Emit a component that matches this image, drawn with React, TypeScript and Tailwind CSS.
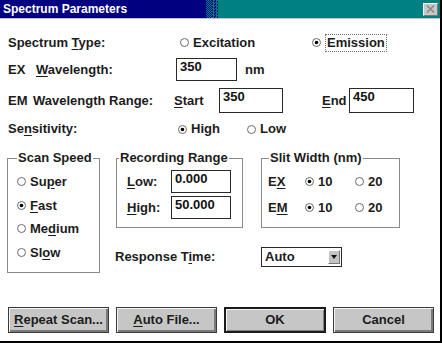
function Radio({ on, label, u }: { on?: boolean; label: string; u?: number }) {
  return (
    <span className="flex items-center">
      <svg width="9" height="9" viewBox="0 0 9 9" className="shrink-0">
        <circle cx="4.5" cy="4.5" r="4" fill="white" stroke="#6a6a6a" strokeWidth="1" />
        {on && <circle cx="4.5" cy="4.5" r="1.8" fill="#000" />}
      </svg>
      <span className="ml-[4px]">
        <Key text={label} u={u} />
      </span>
    </span>
  );
}

function Key({ text, u }: { text: string; u?: number }) {
  if (u === undefined) return <>{text}</>;
  return (
    <>
      {text.slice(0, u)}
      <span className="underline underline-offset-2">{text[u]}</span>
      {text.slice(u + 1)}
    </>
  );
}

function Field({ value, w, h }: { value: string; w: string; h: string }) {
  return (
    <div className={`${w} ${h} bg-white border border-[#2a2a2a] pl-[3px] leading-[16px] text-[#111]`}>
      {value}
    </div>
  );
}

function Button({ children, main }: { children: React.ReactNode; main?: boolean }) {
  return (
    <button
      className={
        main
          ? "w-[102px] h-[26px] bg-[#c6c6c6] border-2 border-[#1a1a1a] shadow-[inset_1px_1px_#f4f4f4,inset_-1px_-1px_#808080] font-bold"
          : "w-[101px] h-[26px] bg-[#c6c6c6] border border-[#3a3a3a] shadow-[inset_1px_1px_#f4f4f4,inset_-2px_-2px_#7a7a7a] font-bold"
      }
    >
      {children}
    </button>
  );
}

export default function App() {
  return (
    <div className="w-[442px] h-[343px] bg-white flex flex-col border-r-2 border-b-2 border-black overflow-hidden font-['Liberation_Sans',Arial,sans-serif] text-[13px] font-bold text-[#1c1c1c]">
      {/* title bar */}
      <div className="h-[18px] flex shrink-0">
        <div className="w-[206px] bg-[#000080] text-white text-[12px] leading-[18px] pl-[3px]">
          Spectrum Parameters
        </div>
        <div className="w-[6px] bg-[repeating-conic-gradient(#000080_0_25%,#008080_0_50%)] bg-[length:2px_2px]" />
        <div className="w-[6px] bg-[repeating-conic-gradient(#008080_0_25%,#000080_0_50%)] bg-[length:3px_3px]" />
        <div className="flex-1 bg-[#008080] flex items-center justify-end pr-[2px]">
          <div className="w-[15px] h-[13px] bg-[#c8c8c8] border border-t-white border-l-white border-b-[#7a7a7a] border-r-[#7a7a7a] flex items-center justify-center">
            <svg width="9" height="8" viewBox="0 0 9 8">
              <path d="M1 0.5 L8 7.5 M8 0.5 L1 7.5" stroke="#8a8a8a" strokeWidth="1.6" />
            </svg>
          </div>
        </div>
      </div>
      <div className="h-px bg-[#c4c4c4] shrink-0" />

      <div className="flex flex-col pl-[8px] flex-1">
        {/* spectrum type */}
        <div className="mt-[14px] h-[19px] flex items-center">
          <span className="w-[172px]">
            Spectrum <Key text="Type:" u={0} />
          </span>
          <span className="w-[132px]">
            <Radio label="Excitation" />
          </span>
          <span className="flex items-center">
            <svg width="9" height="9" viewBox="0 0 9 9">
              <circle cx="4.5" cy="4.5" r="4" fill="white" stroke="#6a6a6a" />
              <circle cx="4.5" cy="4.5" r="1.8" fill="#000" />
            </svg>
            <span className="ml-[4px] px-[1px] border border-dotted border-[#707070] leading-[16px]">Emission</span>
          </span>
        </div>

        {/* ex wavelength */}
        <div className="mt-[6px] h-[23px] flex items-center">
          <span className="w-[28px]">EX</span>
          <span className="w-[140px]">
            <Key text="Wavelength:" u={0} />
          </span>
          <Field value="350" w="w-[61px]" h="h-[23px]" />
          <span className="ml-[8px]">nm</span>
        </div>

        {/* em range */}
        <div className="mt-[7px] h-[25px] flex items-center">
          <span className="w-[25px]">EM</span>
          <span className="w-[141px]">Wavelength Range:</span>
          <span className="w-[45px]">
            <Key text="Start" u={0} />
          </span>
          <Field value="350" w="w-[64px]" h="h-[25px]" />
          <span className="ml-[39px] w-[27px]">
            <Key text="End" u={0} />
          </span>
          <Field value="450" w="w-[65px]" h="h-[25px]" />
        </div>

        {/* sensitivity */}
        <div className="mt-[7px] h-[18px] flex items-center">
          <span className="w-[170px]">
            <Key text="Sensitivity:" u={2} />
          </span>
          <span className="w-[69px]">
            <Radio on label="High" />
          </span>
          <Radio label="Low" />
        </div>

        {/* groups */}
        <div className="mt-[13px] flex items-start">
          <fieldset className="ml-[-1px] w-[93px] h-[122px] border border-[#8a8a8a] flex flex-col">
            <legend className="ml-[9px] px-[1px] leading-[14px]">Scan Speed</legend>
            <div className="flex flex-col pl-[9px] mt-[5px]">
              <div className="h-[23.5px] flex items-center">
                <Radio label="Super" u={2} />
              </div>
              <div className="h-[23.5px] flex items-center">
                <Radio on label="Fast" u={0} />
              </div>
              <div className="h-[23.5px] flex items-center">
                <Radio label="Medium" u={2} />
              </div>
              <div className="h-[23.5px] flex items-center">
                <Radio label="Slow" u={2} />
              </div>
            </div>
          </fieldset>

          <div className="ml-[16px] flex flex-col">
            <div className="flex">
              <fieldset className="w-[127px] h-[77px] border border-[#8a8a8a]">
                <legend className="ml-[2px] px-[1px] leading-[14px]">Recording Range</legend>
                <div className="pl-[10px] mt-[5px] h-[23px] flex items-center">
                  <span className="w-[44px]">
                    <Key text="Low:" u={0} />
                  </span>
                  <Field value="0.000" w="w-[60px]" h="h-[23px]" />
                </div>
                <div className="pl-[10px] mt-[3px] h-[23px] flex items-center">
                  <span className="w-[44px]">
                    <Key text="High:" u={0} />
                  </span>
                  <Field value="50.000" w="w-[60px]" h="h-[23px]" />
                </div>
              </fieldset>

              <fieldset className="ml-[18px] w-[139px] h-[77px] border border-[#8a8a8a]">
                <legend className="ml-[7px] px-[1px] leading-[14px]">Slit Width (nm)</legend>
                <div className="pl-[6px] mt-[5px] h-[23px] flex items-center">
                  <span className="w-[37px]">
                    <Key text="EX" u={1} />
                  </span>
                  <span className="w-[50px]">
                    <Radio on label="10" />
                  </span>
                  <Radio label="20" />
                </div>
                <div className="pl-[6px] mt-[3px] h-[23px] flex items-center">
                  <span className="w-[37px]">
                    <Key text="EM" u={1} />
                  </span>
                  <span className="w-[50px]">
                    <Radio on label="10" />
                  </span>
                  <Radio label="20" />
                </div>
              </fieldset>
            </div>

            <div className="mt-[19px] ml-[-1px] flex items-center">
              <span className="w-[146px]">
                Response <Key text="Time:" u={1} />
              </span>
              <div className="w-[81px] h-[20px] border border-[#2a2a2a] bg-white flex items-center justify-between pl-[3px] pr-[1px]">
                <span>Auto</span>
                <div className="w-[12px] h-[14px] bg-[#c4c4c4] border border-t-white border-l-white border-b-[#777] border-r-[#777] flex items-center justify-center">
                  <svg width="6" height="4" viewBox="0 0 6 4">
                    <path d="M0 0 H6 L3 4 Z" fill="#111" />
                  </svg>
                </div>
              </div>
            </div>
          </div>
        </div>

        {/* buttons */}
        <div className="mt-auto mb-[8px] flex gap-[7px]">
          <Button>
            <Key text="Repeat Scan..." u={0} />
          </Button>
          <Button>
            <Key text="Auto File..." u={0} />
          </Button>
          <Button main>OK</Button>
          <Button>Cancel</Button>
        </div>
      </div>
    </div>
  );
}
